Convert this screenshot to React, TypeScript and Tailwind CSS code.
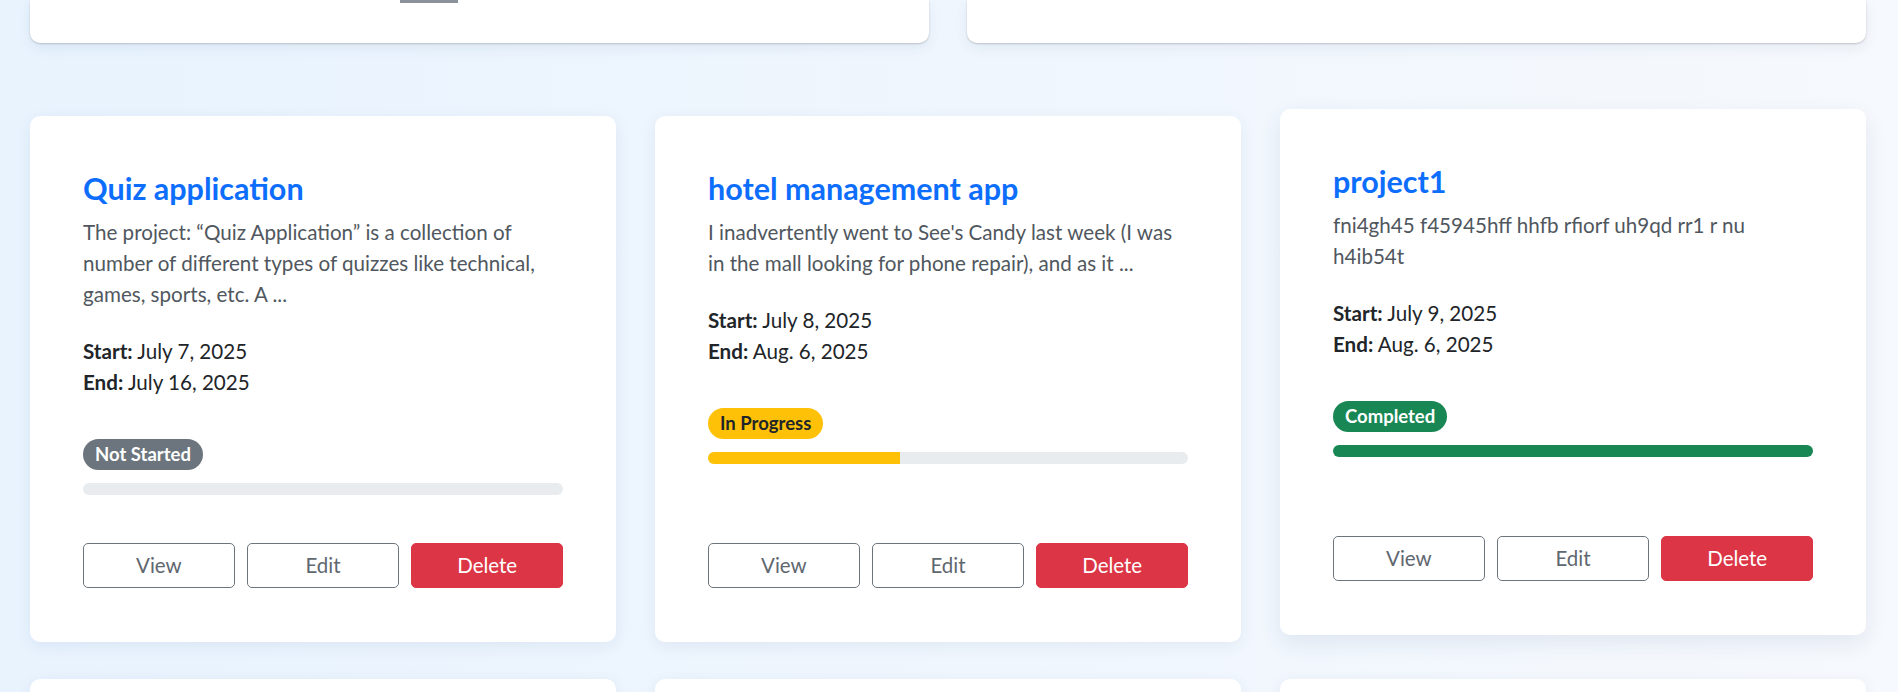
import React from 'react';

type Status = 'Not Started' | 'In Progress' | 'Completed';

interface Project {
  id: number;
  title: string;
  description: string;
  start: string;
  end: string;
  status: Status;
  progress: number;
  lifted?: boolean;
}

const PROJECTS: Project[] = [
  {
    id: 1,
    title: 'Quiz application',
    description:
      'The project: \u201cQuiz Application\u201d is a collection of number of different types of quizzes like technical, games, sports, etc. A ...',
    start: 'July 7, 2025',
    end: 'July 16, 2025',
    status: 'Not Started',
    progress: 0,
  },
  {
    id: 2,
    title: 'hotel management app',
    description:
      "I inadvertently went to See's Candy last week (I was in the mall looking for phone repair), and as it ...",
    start: 'July 8, 2025',
    end: 'Aug. 6, 2025',
    status: 'In Progress',
    progress: 40,
  },
  {
    id: 3,
    title: 'project1',
    description: 'fni4gh45 f45945hff hhfb rfiorf uh9qd rr1 r nu h4ib54t',
    start: 'July 9, 2025',
    end: 'Aug. 6, 2025',
    status: 'Completed',
    progress: 100,
    lifted: true,
  },
];

const BADGE: Record<Status, string> = {
  'Not Started': 'bg-[#6c757d] text-white',
  'In Progress': 'bg-[#ffc107] text-[#212529]',
  Completed: 'bg-[#198754] text-white',
};

const BAR: Record<Status, string> = {
  'Not Started': 'bg-[#6c757d]',
  'In Progress': 'bg-[#ffc107]',
  Completed: 'bg-[#198754]',
};

const ProjectCard: React.FC<{ project: Project }> = ({ project }) => {
  return (
    <div
      className={`flex flex-col bg-white rounded-[10px] px-[53px] pt-[55px] pb-[54px] ${
        project.lifted
          ? '-translate-y-[7px] shadow-[0_8px_22px_rgba(30,60,110,0.09)]'
          : 'shadow-[0_4px_16px_rgba(30,60,110,0.07)]'
      }`}
    >
      <h4 className="text-[30.5px] leading-[35px] font-bold text-[#0d6efd] mb-[11px]">{project.title}</h4>
      <p className="text-[20.6px] leading-[31px] text-[#50575e] mb-[26px]">{project.description}</p>

      <div className="text-[20.6px] leading-[31px] text-[#212529]">
        <div>
          <span className="font-bold">Start:</span> {project.start}
        </div>
        <div>
          <span className="font-bold">End:</span> {project.end}
        </div>
      </div>

      <div className="mt-[41px] mb-[48px]">
        <div className="flex">
          <span
            className={`rounded-full px-[12px] py-[6px] text-[18.5px] leading-[19px] font-bold ${BADGE[project.status]}`}
          >
            {project.status}
          </span>
        </div>
        <div className="mt-[13px] h-[12px] w-full rounded-full bg-[#e9ecef] overflow-hidden">
          <div className={`h-full ${BAR[project.status]}`} style={{ width: `${project.progress}%` }} />
        </div>
      </div>

      <div className="mt-auto flex gap-[12.5px]">
        <button className="flex-1 h-[45px] rounded-[5px] border border-[#6c757d] text-[#5f676f] text-[20.5px] bg-white">
          View
        </button>
        <button className="flex-1 h-[45px] rounded-[5px] border border-[#6c757d] text-[#5f676f] text-[20.5px] bg-white">
          Edit
        </button>
        <button className="flex-1 h-[45px] rounded-[5px] border border-[#dc3545] bg-[#dc3545] text-white text-[20.5px]">
          Delete
        </button>
      </div>
    </div>
  );
};

export default function App() {
  return (
    <div className="h-[692px] overflow-hidden bg-linear-to-r from-[#e8f3fe] to-[#f6f9fd] pl-[30px] pr-[32px] font-['Lato','Segoe_UI',sans-serif]">
      {/* summary cards, scrolled mostly out of view */}
      <div className="grid grid-cols-2 gap-x-[38px]">
        <div className="h-[43px] bg-white rounded-b-[10px] shadow-[0_1px_2px_rgba(0,0,0,0.18),0_5px_14px_rgba(30,60,110,0.07)]">
          <div className="ml-[370px] w-[58px] h-[3px] bg-[#8b9299]" />
        </div>
        <div className="h-[43px] bg-white rounded-b-[10px] shadow-[0_1px_2px_rgba(0,0,0,0.18),0_5px_14px_rgba(30,60,110,0.07)]" />
      </div>

      <div className="mt-[73px] grid grid-cols-3 gap-x-[39px] gap-y-[37px]">
        {PROJECTS.map((p) => (
          <ProjectCard key={p.id} project={p} />
        ))}
        <div className="h-[300px] bg-white rounded-[10px] shadow-[0_4px_16px_rgba(30,60,110,0.07)]" />
        <div className="h-[300px] bg-white rounded-[10px] shadow-[0_4px_16px_rgba(30,60,110,0.07)]" />
        <div className="h-[300px] bg-white rounded-[10px] shadow-[0_4px_16px_rgba(30,60,110,0.07)]" />
      </div>
    </div>
  );
}
